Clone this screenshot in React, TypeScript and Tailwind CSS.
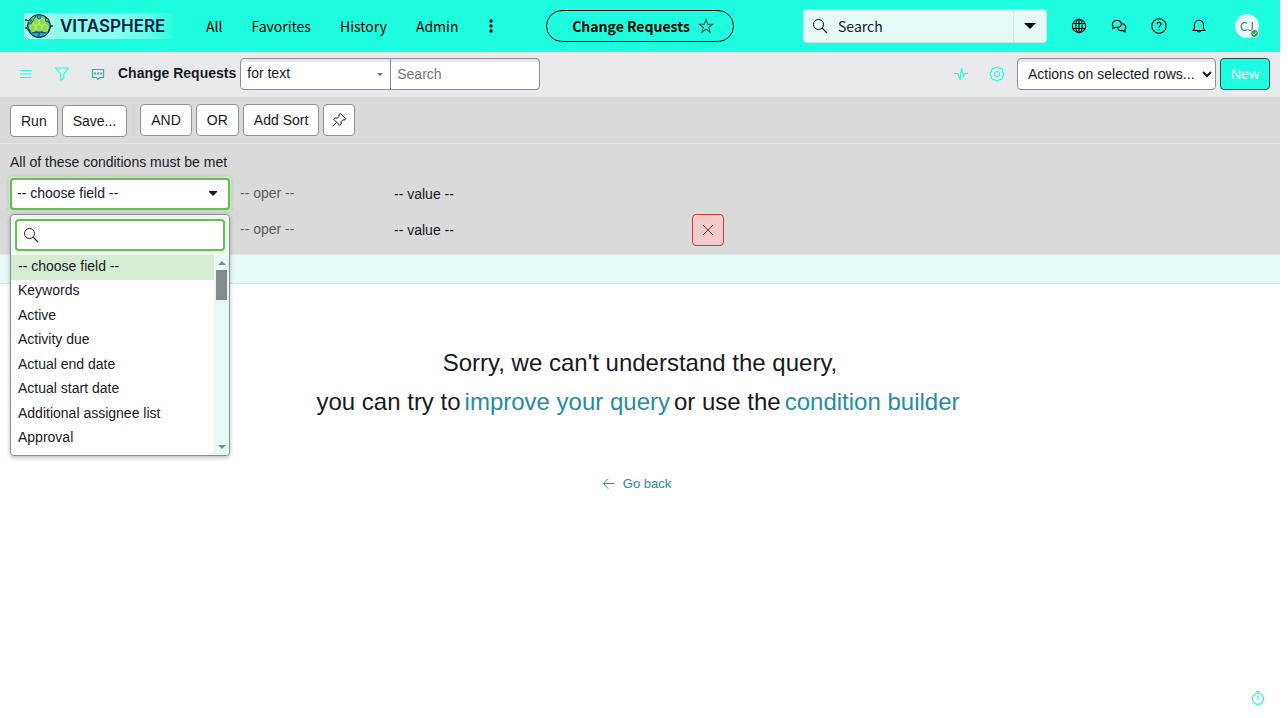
import React from 'react';

const navItems = ['All', 'Favorites', 'History', 'Admin'];

const fields = [
  '-- choose field --',
  'Keywords',
  'Active',
  'Activity due',
  'Actual end date',
  'Actual start date',
  'Additional assignee list',
  'Approval',
];

type IconProps = { className?: string; children: React.ReactNode };

function Icon({ className = 'size-4', children }: IconProps) {
  return (
    <svg
      viewBox="0 0 16 16"
      fill="none"
      stroke="currentColor"
      strokeWidth="1.1"
      aria-hidden="true"
      className={`shrink-0 ${className}`}
    >
      {children}
    </svg>
  );
}

function SearchIcon() {
  return (
    <Icon>
      <circle cx="6.5" cy="6.5" r="5" strokeWidth="1" />
      <path d="M10.2 10.2 15 15" />
    </Icon>
  );
}

function Caret({ className }: { className: string }) {
  return (
    <svg viewBox="0 0 10 5" fill="currentColor" aria-hidden="true" className={className}>
      <path d="M0 0h10L5 5z" />
    </svg>
  );
}

function Logo() {
  return (
    <a
      href="#home"
      className="ml-1 flex h-[26px] w-[150px] items-center gap-1.5 bg-linear-to-r from-[#8ffbe9] via-[#8bfff3] via-60% to-[#1ffde0]"
    >
      <svg viewBox="0 0 30 26" aria-hidden="true" className="h-[26px] w-[30px] shrink-0">
        <rect width="30" height="26" fill="#a3f8ea" />
        <circle cx="15" cy="13" r="11.5" fill="#2b8d99" stroke="#103a4c" />
        <path d="M5 9 9 4l6-2 6 2 4 5v7H5z" fill="#7ccb58" />
        <path d="M4.500 16q10.500 4 21 0-2 8-10.500 8T4.500 16z" fill="#1ba7cf" stroke="#0a3850" />
        <path d="m9 7 3-2 3 2v4l-3 2-3-2zm6 0 3-2 3 2v4l-3 2-3-2zm-3 6 3-2 3 2v4l-3 2-3-2zm-6 0 3-2 3 2v4l-3 2-3-2zm12 0 3-2 3 2v4l-3 2-3-2z" fill="#8edb4c" stroke="#c9f08a" strokeWidth=".7" />
        <path d="m2 7 6 2 4-6M2 15l5 3M8 20l7-1 7 1M20 3l5 7M25 15l3-2M15 19v4" fill="none" stroke="#123f4b" strokeWidth=".9" />
        <g fill="#2daad8" stroke="#103a4c" strokeWidth=".6">
          <circle cx="15" cy="4" r="2" />
          <circle cx="23" cy="7" r="1.800" />
          <circle cx="6" cy="9" r="2" />
        </g>
        <g fill="#123f4b">
          <circle cx="2" cy="7" r="1" />
          <circle cx="2" cy="15" r="1" />
          <circle cx="28" cy="13" r="1" />
        </g>
      </svg>
      <span className="font-['Inter',sans-serif] text-[17px] font-semibold text-[#062044]">VITASPHERE</span>
    </a>
  );
}

function Header() {
  return (
    <header className="flex h-[52px] items-center bg-[#1ffde0] px-5 font-['Noto_Sans_CJK_SC',sans-serif] text-sm text-black">
      <div className="flex flex-1 items-center">
        <Logo />
        <nav className="ml-8 flex items-center gap-[29px]">
          {navItems.map((item) => (
            <a key={item} href={`#${item.toLowerCase()}`}>
              {item}
            </a>
          ))}
          <button type="button" aria-label="More" className="flex w-2 justify-center">
            <svg viewBox="0 0 4 14" className="h-[14px] w-1" fill="currentColor" aria-hidden="true">
              <circle cx="2" cy="2" r="1.700" />
              <circle cx="2" cy="7" r="1.700" />
              <circle cx="2" cy="12" r="1.700" />
            </svg>
          </button>
        </nav>
      </div>
      <div className="flex h-8 w-[188px] items-center justify-center gap-2 rounded-full border border-black pl-1.5 font-bold">
        <span>Change Requests</span>
        <button type="button" aria-label="Favorite" className="text-[#3c5d49]">
          <Icon>
            <path d="m8 1.300 1.700 4.900h5.100l-4.100 3.100 1.500 5L8 11.300l-4.200 3 1.500-5-4.100-3.100h5.100z" />
          </Icon>
        </button>
      </div>
      <div className="flex flex-1 items-center justify-end">
        <div className="flex h-[34px] w-[244px] overflow-hidden rounded-[4px] border border-[#c5e5e0] bg-[#e5faf7]">
          <label className="flex min-w-0 flex-1 items-center gap-2 pl-2">
            <SearchIcon />
            <input
              aria-label="Search"
              placeholder="Search"
              className="w-full min-w-0 bg-transparent pl-0.5 outline-none placeholder:text-[#10201e]"
            />
          </label>
          <button
            type="button"
            aria-label="Search scope"
            className="flex w-[33px] items-center justify-center border-l border-[#c5e5e0]"
          >
            <Caret className="h-[6px] w-3" />
          </button>
        </div>
        <div className="ml-6 flex items-center gap-6">
          <button type="button" aria-label="Scope">
            <Icon>
              <circle cx="8" cy="8" r="6.600" />
              <ellipse cx="8" cy="8" rx="3.200" ry="6.600" />
              <path d="M2 5.500h12M2 10.500h12M8 1.500v13" />
            </Icon>
          </button>
          <button type="button" aria-label="Conversations">
            <Icon>
              <path d="M2 10.600V8.200A3.800 3.800 0 0 1 4.500 2.500h2.200a3.800 3.800 0 0 1 3.700 3 3.800 3.800 0 0 1-3.700 3.800H4.500z" />
              <path d="M10.300 5.800h.8a3.500 3.500 0 0 1 2.900 5.700v2.400l-2.200-1.300H9.700a3.400 3.400 0 0 1-3.200-3.100" />
            </Icon>
          </button>
          <button type="button" aria-label="Help">
            <Icon>
              <circle cx="8" cy="8" r="7.200" />
              <path d="M6 6.200a2 2 0 1 1 3.200 1.600C8.300 8.400 8 8.700 8 9.600" />
              <path d="M8 11v1.300" strokeWidth="1.200" />
            </Icon>
          </button>
          <button type="button" aria-label="Notifications">
            <Icon>
              <path d="M3.500 10.500V6.800a4.500 4.500 0 0 1 9 0v3.700l1.400 2H2.100zM6.300 12.500c.2 2 3.200 2 3.400 0" />
            </Icon>
          </button>
        </div>
        <button
          type="button"
          aria-label="User menu"
          className="relative mr-px ml-7 flex size-6 items-center justify-center rounded-full bg-[#e5faf7] text-xs text-[#5d6c72]"
        >
          CJ
          <svg viewBox="0 0 9 9" className="absolute right-0 bottom-0 size-[9px]" aria-hidden="true">
            <circle cx="4.500" cy="4.500" r="4" fill="#3f9c5c" stroke="#e5faf7" />
            <path d="m2.800 4.600 1.200 1.200 2.200-2.300" fill="none" stroke="#fff" strokeWidth=".9" />
          </svg>
        </button>
      </div>
    </header>
  );
}

function ListToolbar() {
  return (
    <div className="flex h-[46px] items-center border-b border-[#dadada] bg-[#e9eaec] px-[10px] pb-px">
      <div className="flex items-center gap-5 pl-2 text-[#1ffde0]">
        <button type="button" aria-label="List menu">
          <Icon>
            <path d="M2 4.500h11.500M2 8h11.500M2 11.500h11.500" />
          </Icon>
        </button>
        <button type="button" aria-label="Filter">
          <Icon>
            <path d="M1.700 2h12.600L9.800 8.200V12l-3 2.200v-6z" />
          </Icon>
        </button>
        <button type="button" aria-label="Activity stream" className="text-[#2bb8a6]">
          <Icon>
            <path d="M2.500 3.500h11v8H9.800L8 13.300l-1.800-1.800H2.500z" strokeWidth="1.200" />
            <path d="M4 7.500h2M7 7.500h2M10 7.500h2" strokeWidth="2" />
          </Icon>
        </button>
      </div>
      <h1 className="ml-3 pb-0.5 text-sm font-bold">Change Requests</h1>
      <div className="ml-1 flex">
        <div className="relative">
          <select
            aria-label="Search column"
            className="h-8 w-[151px] appearance-none rounded-l-[4px] border border-[#8b8e9c] bg-white px-[6px] pb-0.5 text-sm shadow-[inset_0_3px_0_#e6e6e6]"
          >
            <option>for text</option>
          </select>
          <Caret className="pointer-events-none absolute top-[15px] right-2 h-[3px] w-[6px] text-[#6b6e78]" />
        </div>
        <input
          aria-label="Search list"
          placeholder="Search"
          className="-ml-px h-8 w-[150px] rounded-r-[4px] border border-[#8b8e9c] bg-white px-[6px] text-sm shadow-[inset_0_3px_0_#e6e6e6] placeholder:text-[#74777f]"
        />
      </div>
      <div className="ml-auto flex items-center text-[#1ffde0]">
        <button type="button" aria-label="Activity">
          <Icon>
            <path d="M1 7.500h4L7.200 14 8.500 2l2 8.500L12 7.500h3" />
          </Icon>
        </button>
        <button type="button" aria-label="Settings" className="ml-5">
          <Icon>
            <path d="M5.700 2.460A2.600 2.600 0 0 1 10.300 2.460A2.600 2.600 0 0 1 13.540 5.700A2.600 2.600 0 0 1 13.540 10.300A2.600 2.600 0 0 1 10.300 13.540A2.600 2.600 0 0 1 5.700 13.540A2.600 2.600 0 0 1 2.460 10.300A2.600 2.600 0 0 1 2.460 5.700A2.600 2.600 0 0 1 5.700 2.460z" />
            <circle cx="8" cy="8" r="2.500" />
          </Icon>
        </button>
        <select
          aria-label="Actions on selected rows"
          className="ml-3 h-8 w-[199px] rounded-[4px] border border-[#8b8e9c] bg-white pl-[6px] text-sm text-[#181a1f] shadow-[inset_0_3px_0_#e6e6e6]"
        >
          <option>Actions on selected rows...</option>
        </select>
        <button
          type="button"
          className="ml-1 h-8 w-[50px] rounded-[4px] border border-[#12564d] bg-[#1ffde0] text-sm text-white"
        >
          New
        </button>
      </div>
    </div>
  );
}

function ToolButton({ children }: { children: React.ReactNode }) {
  return (
    <button type="button" className="h-8 rounded-[4px] border border-[#8f9296] bg-white px-[10px] text-sm">
      {children}
    </button>
  );
}

function FilterToolbar() {
  return (
    <div className="flex h-[46px] items-start border-b border-[#e6e7e9] px-[10px] pt-[6px]">
      <div className="flex gap-1 pt-px">
        <ToolButton>Run</ToolButton>
        <ToolButton>Save...</ToolButton>
      </div>
      <div className="ml-[6px] flex gap-1 border-l border-[#d6d6d6] pl-[6px]">
        <ToolButton>AND</ToolButton>
        <ToolButton>OR</ToolButton>
        <ToolButton>Add Sort</ToolButton>
        <button
          type="button"
          aria-label="Pin filter"
          className="flex size-8 items-center justify-center rounded-[4px] border border-[#8f9296] bg-white"
        >
          <Icon>
            <path
              d="M9.500 1.500 14.500 6.500 13.700 8 11.800 7.900 10 9.700 10.200 12 8.700 13.300 2.700 7.300 4 5.900 6.300 6.200 8.100 4.300 8 2.300zM5.700 10.300l-4 4"
              strokeWidth="1"
            />
          </Icon>
        </button>
      </div>
    </div>
  );
}

function FieldMenu() {
  return (
    <div className="absolute top-full left-0 z-10 mt-1 w-[220px] overflow-hidden rounded-[4px] border border-[#8b8e9c] bg-white shadow-[0_2px_4px_rgba(0,0,0,0.25)]">
      <div className="p-1">
        <label className="flex h-8 items-center gap-1 rounded-[4px] border-2 border-[#68be55] bg-white px-[6px] shadow-[0_0_0_4px_#ecf8ea]">
          <SearchIcon />
          <input aria-label="Search fields" className="w-full min-w-0 text-sm outline-none" />
        </label>
      </div>
      <div className="flex h-[200px]">
        <ul role="listbox" aria-label="Fields" className="grid h-[196px] flex-1 grid-rows-8 text-sm">
          {fields.map((field, i) => (
            <li
              key={field}
              role="option"
              aria-selected={i === 0}
              className="flex items-center px-[7px] pb-[3px] aria-selected:bg-[#d7edd3]"
            >
              {field}
            </li>
          ))}
        </ul>
        <div className="flex w-[15px] flex-col items-center bg-[#e5faf7] pt-[6px] pb-[6px] text-[#868a8c]">
          <Caret className="h-1 w-2 rotate-180" />
          <div className="mt-[5px] h-[30px] w-[11px] bg-[#868a8c]" />
          <Caret className="mt-auto h-1 w-2" />
        </div>
      </div>
    </div>
  );
}

function Conditions() {
  return (
    <div className="h-[111px] border-b border-[#e6e7e9] px-[10px] pt-2 text-sm">
      <p>All of these conditions must be met</p>
      <div className="mt-[6px] flex h-8 items-center">
        <div className="relative">
          <button
            type="button"
            aria-haspopup="listbox"
            aria-expanded="true"
            className="flex h-8 w-[220px] items-center justify-between rounded-[4px] border-2 border-[#68be55] bg-white pr-[11px] pb-0.5 pl-[5px] shadow-[0_0_0_4px_#ccd8c9]"
          >
            -- choose field --
            <svg viewBox="0 0 8 5" fill="currentColor" aria-hidden="true" className="h-[5px] w-2">
              <path d="M0 0h8v1L4 5 0 1z" />
            </svg>
          </button>
          <FieldMenu />
        </div>
        <span className="ml-[10px] w-[154px] pb-0.5 text-[#5c5e62]">-- oper --</span>
        <span>-- value --</span>
      </div>
      <div className="mt-1 flex h-8 items-center">
        <span className="ml-[230px] w-[154px] pb-0.5 text-[#5c5e62]">-- oper --</span>
        <span className="w-[298px]">-- value --</span>
        <button
          type="button"
          aria-label="Remove condition"
          className="flex size-8 items-center justify-center rounded-[4px] border border-[#d13a35] bg-[#f2cccb] text-[#8c2a28]"
        >
          <Icon>
            <path d="m3 3 10 10M13 3 3 13" strokeWidth="1" />
          </Icon>
        </button>
      </div>
    </div>
  );
}

export default function App() {
  return (
    <div className="flex min-h-screen flex-col bg-white pr-2 font-['Liberation_Sans',Arial,sans-serif] text-[#181a1f]">
      <Header />
      <ListToolbar />
      <section aria-label="Filter" className="bg-[#dadada]">
        <FilterToolbar />
        <Conditions />
      </section>
      <div className="h-[29px] border-b border-[#dfe3e4] bg-[#e5faf7]" />
      <main className="flex flex-1 flex-col items-center pt-[59px]">
        <p className="text-2xl leading-[39px]">Sorry, we can't understand the query,</p>
        <p className="flex text-2xl leading-[39px]">
          you can try to
          <a href="#query" className="mx-1 text-[#278c9f]">
            improve your query
          </a>
          or use the
          <a href="#builder" className="mx-1 text-[#278c9f]">
            condition builder
          </a>
        </p>
        <a href="#back" className="mt-[53px] flex items-center gap-1.5 pr-2 text-[13px] text-[#278c9f]">
          <Icon>
            <path d="M13.500 7.500h-11M7 2.500l-4.500 5 4.500 5" strokeWidth="1" />
          </Icon>
          Go back
        </a>
        <button type="button" aria-label="Response time" className="mt-auto mr-[14px] mb-3 self-end text-[#1ffde0]">
          <Icon>
            <circle cx="8" cy="8.800" r="5.600" />
            <path d="M6 1.500h4M8 1.500v2M8 5.500v4" strokeWidth="1.200" />
          </Icon>
        </button>
      </main>
    </div>
  );
}
